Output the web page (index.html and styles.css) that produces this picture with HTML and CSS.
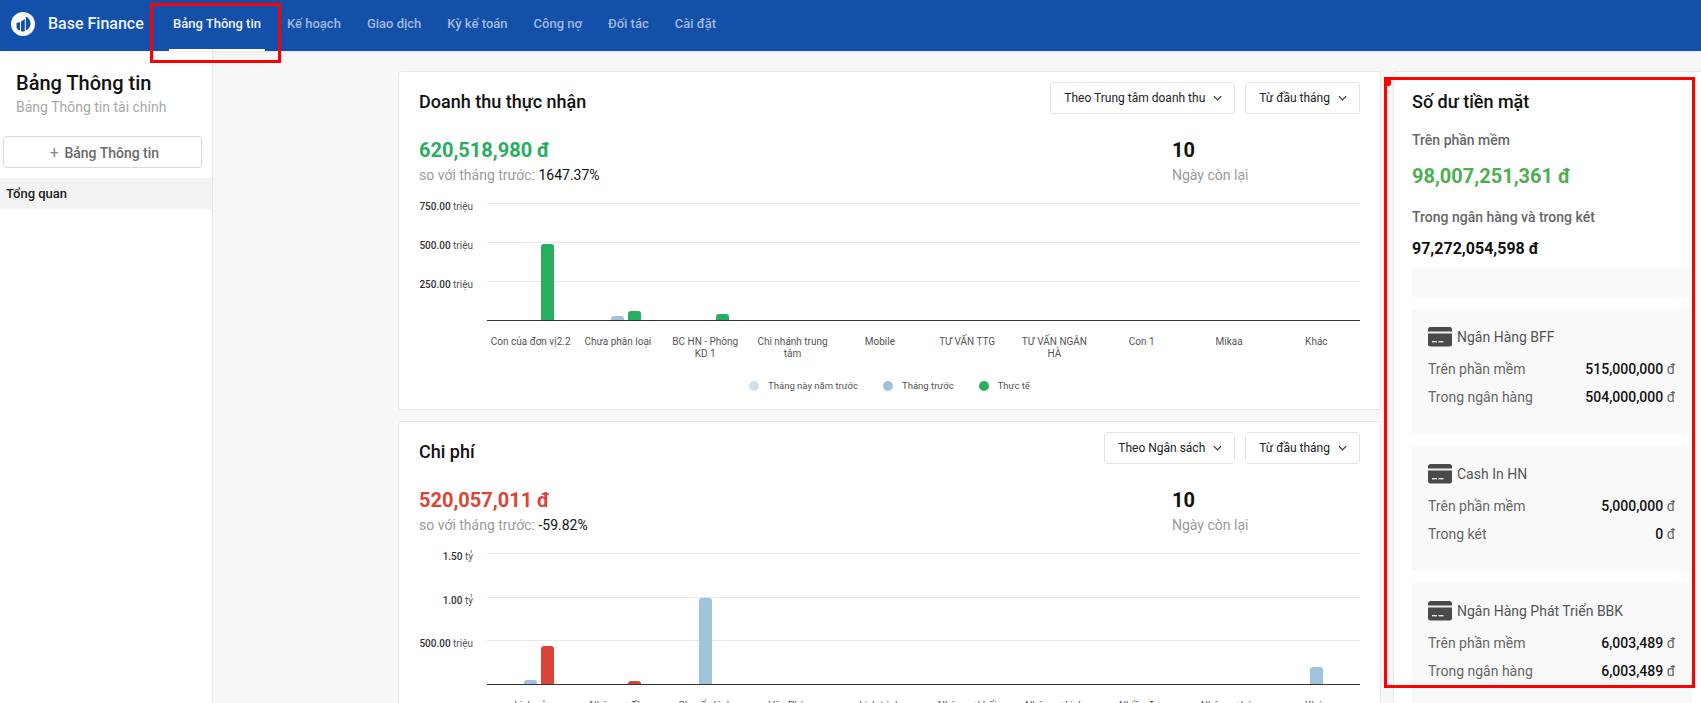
FILE: index.html
```html
<!DOCTYPE html>
<html lang="vi">
<head>
<meta charset="utf-8">
<title>Base Finance</title>
<link rel="stylesheet" href="styles.css">
</head>
<body>
<svg class="defs" width="0" height="0" aria-hidden="true">
  <defs>
    <symbol id="chev" viewBox="0 0 10 6"><path d="M1 1l4 4 4-4" fill="none" stroke="currentColor" stroke-width="1.3"/></symbol>
    <symbol id="bank" viewBox="0 0 24 20">
      <rect x="0" y="0" width="24" height="19.500" rx="2.500" fill="#4a4a4a"/>
      <rect x="0" y="4.500" width="24" height="2" fill="#f0f0f0"/>
      <rect x="4" y="14" width="5" height="1.400" fill="#e8e8e8"/>
      <rect x="10.500" y="14" width="5" height="1.400" fill="#e8e8e8"/>
    </symbol>
  </defs>
</svg>
<header class="topbar">
  <svg class="logo" viewBox="0 0 24 24" aria-hidden="true">
    <circle cx="12" cy="12" r="12" fill="#fff"/>
    <path d="M5.500 11l3.500-1v8.500l-2-.5q-1.500-2-1.500-3.500z" fill="#1250aa"/>
    <path d="M10 9.500l3.800-2.500v12.300q-1.900.3-3.800-.1z" fill="#1250aa"/>
    <path d="M14.800 4.500c2.800 1 4.700 3.900 4.700 7.200 0 2.800-1.900 5.500-4.700 6.800z" fill="#1250aa"/>
  </svg>
  <div class="brand">Base Finance</div>
  <nav class="nav">
    <a class="nav-item active">Bảng Thông tin</a>
    <a class="nav-item">Kế hoạch</a>
    <a class="nav-item">Giao dịch</a>
    <a class="nav-item">Kỳ kế toán</a>
    <a class="nav-item">Công nợ</a>
    <a class="nav-item">Đối tác</a>
    <a class="nav-item">Cài đặt</a>
  </nav>
</header>
<div class="layout">
  <aside class="sidebar">
    <h1 class="side-title">Bảng Thông tin</h1>
    <p class="side-sub">Bảng Thông tin tài chính</p>
    <button class="side-btn"><span class="plus">+</span> Bảng Thông tin</button>
    <div class="side-item">Tổng quan</div>
  </aside>
  <main class="main">
    <div class="charts">
      <section class="card card-rev">
        <div class="card-head">
          <h2 class="card-title">Doanh thu thực nhận</h2>
          <div class="filters">
            <div class="select">Theo Trung tâm doanh thu<svg class="chev"><use href="#chev"/></svg></div>
            <div class="select">Từ đầu tháng<svg class="chev"><use href="#chev"/></svg></div>
          </div>
        </div>
        <div class="metrics">
          <div>
            <div class="amount green">620,518,980 đ</div>
            <div class="muted">so với tháng trước: <span class="dark">1647.37%</span></div>
          </div>
          <div>
            <div class="amount dark">10</div>
            <div class="muted">Ngày còn lại</div>
          </div>
        </div>
        <div class="chart chart-a">
          <div class="ylabels">
            <div class="ylabel">750.00 <span>triệu</span></div>
            <div class="ylabel">500.00 <span>triệu</span></div>
            <div class="ylabel">250.00 <span>triệu</span></div>
          </div>
          <div class="plot">
            <div class="gridrow"></div><div class="gridrow"></div><div class="gridrow"></div>
            <div class="bars">
              <div class="cat"><i class="slot"></i><i class="slot"></i><i class="slot"><b class="bar green-bar" style="height:76px"></b></i></div>
              <div class="cat"><i class="slot"></i><i class="slot"><b class="bar blue-bar" style="height:4px"></b></i><i class="slot"><b class="bar green-bar" style="height:9px"></b></i></div>
              <div class="cat"><i class="slot"></i><i class="slot"></i><i class="slot"><b class="bar green-bar" style="height:6px"></b></i></div>
              <div class="cat"><i class="slot"></i><i class="slot"></i><i class="slot"></i></div>
              <div class="cat"><i class="slot"></i><i class="slot"></i><i class="slot"></i></div>
              <div class="cat"><i class="slot"></i><i class="slot"></i><i class="slot"></i></div>
              <div class="cat"><i class="slot"></i><i class="slot"></i><i class="slot"></i></div>
              <div class="cat"><i class="slot"></i><i class="slot"></i><i class="slot"></i></div>
              <div class="cat"><i class="slot"></i><i class="slot"></i><i class="slot"></i></div>
              <div class="cat"><i class="slot"></i><i class="slot"></i><i class="slot"></i></div>
            </div>
          </div>
          <div class="xlabels">
            <div>Con của đơn vị2.2</div><div>Chưa phân loại</div><div>BC HN - Phòng<br>KD 1</div><div>Chi nhánh trung<br>tâm</div><div>Mobile</div><div>TƯ VẤN TTG</div><div>TƯ VẤN NGÂN<br>HÀ</div><div>Con 1</div><div>Mikaa</div><div>Khác</div>
          </div>
          <div class="legend">
            <span class="leg"><i class="dot light-dot"></i>Tháng này năm trước</span>
            <span class="leg"><i class="dot blue-dot"></i>Tháng trước</span>
            <span class="leg"><i class="dot green-dot"></i>Thực tế</span>
          </div>
        </div>
      </section>
      <section class="card">
        <div class="card-head">
          <h2 class="card-title">Chi phí</h2>
          <div class="filters">
            <div class="select">Theo Ngân sách<svg class="chev"><use href="#chev"/></svg></div>
            <div class="select">Từ đầu tháng<svg class="chev"><use href="#chev"/></svg></div>
          </div>
        </div>
        <div class="metrics">
          <div>
            <div class="amount red">520,057,011 đ</div>
            <div class="muted">so với tháng trước: <span class="dark">-59.82%</span></div>
          </div>
          <div>
            <div class="amount dark">10</div>
            <div class="muted">Ngày còn lại</div>
          </div>
        </div>
        <div class="chart chart-b">
          <div class="ylabels">
            <div class="ylabel">1.50 <span>tỷ</span></div>
            <div class="ylabel">1.00 <span>tỷ</span></div>
            <div class="ylabel">500.00 <span>triệu</span></div>
          </div>
          <div class="plot">
            <div class="gridrow"></div><div class="gridrow"></div><div class="gridrow"></div>
            <div class="bars">
              <div class="cat"><i class="slot"></i><i class="slot"><b class="bar blue-bar" style="height:4px"></b></i><i class="slot"><b class="bar red-bar" style="height:38px"></b></i></div>
              <div class="cat"><i class="slot"></i><i class="slot"></i><i class="slot"><b class="bar red-bar" style="height:3px"></b></i></div>
              <div class="cat"><i class="slot"></i><i class="slot"><b class="bar blue-bar" style="height:86px"></b></i><i class="slot"></i></div>
              <div class="cat"><i class="slot"></i><i class="slot"></i><i class="slot"></i></div>
              <div class="cat"><i class="slot"></i><i class="slot"></i><i class="slot"></i></div>
              <div class="cat"><i class="slot"></i><i class="slot"></i><i class="slot"></i></div>
              <div class="cat"><i class="slot"></i><i class="slot"></i><i class="slot"></i></div>
              <div class="cat"><i class="slot"></i><i class="slot"></i><i class="slot"></i></div>
              <div class="cat"><i class="slot"></i><i class="slot"></i><i class="slot"></i></div>
              <div class="cat"><i class="slot"></i><i class="slot"><b class="bar blue-bar" style="height:17px"></b></i><i class="slot"></i></div>
            </div>
          </div>
          <div class="xlabels">
            <div>Lịch sử</div><div>Nhân sự đầu</div><div>Chuyển lệch</div><div>Văn Phòng</div><div>Lịch trình</div><div>Nhân sự khối</div><div>Nhân sự kinh doanh</div><div>Nhiều đơn</div><div>Nhân sự bán</div><div>Khác</div>
          </div>
        </div>
      </section>
    </div>
    <section class="card cash">
      <h2 class="card-title">Số dư tiền mặt</h2>
      <div class="cash-label cash-l1">Trên phần mềm</div>
      <div class="cash-big">98,007,251,361 đ</div>
      <div class="cash-label cash-l2">Trong ngân hàng và trong két</div>
      <div class="cash-total">97,272,054,598 đ</div>
      <div class="cash-spacer"></div>
      <div class="acct">
        <div class="acct-name"><svg class="acct-icon"><use href="#bank"/></svg>Ngân Hàng BFF</div>
        <div class="acct-row"><span>Trên phần mềm</span><span><b>515,000,000</b> đ</span></div>
        <div class="acct-row"><span>Trong ngân hàng</span><span><b>504,000,000</b> đ</span></div>
      </div>
      <div class="acct">
        <div class="acct-name"><svg class="acct-icon"><use href="#bank"/></svg>Cash In HN</div>
        <div class="acct-row"><span>Trên phần mềm</span><span><b>5,000,000</b> đ</span></div>
        <div class="acct-row"><span>Trong két</span><span><b>0</b> đ</span></div>
      </div>
      <div class="acct">
        <div class="acct-name"><svg class="acct-icon"><use href="#bank"/></svg>Ngân Hàng Phát Triển BBK</div>
        <div class="acct-row"><span>Trên phần mềm</span><span><b>6,003,489</b> đ</span></div>
        <div class="acct-row"><span>Trong ngân hàng</span><span><b>6,003,489</b> đ</span></div>
      </div>
    </section>
  </main>
</div>
<div class="mark mark-nav"></div>
<div class="mark mark-cash"></div>
</body>
</html>
```
FILE: styles.css
```css
* { box-sizing: border-box; }
html, body { margin: 0; height: 703px; overflow: hidden; }
body { font-family: Roboto, "Noto Sans", sans-serif; background: #f7f7f7; color: #111; position: relative; }
.defs { position: absolute; }
h1, h2, p { margin: 0; font-weight: 500; }

.topbar { height: 51px; background: #1250aa; display: flex; align-items: center; padding: 0 0 3px 11px; box-shadow: 0 1px 3px rgba(0,0,0,.08); position: relative; }
.logo { width: 24px; height: 24px; flex: none; }
.brand { margin-left: 13px; color: #eef3fb; font-size: 16px; font-weight: 500; line-height: 20px; width: 96px; white-space: nowrap; }
.nav { display: flex; gap: 18px; margin-left: 25px; height: 51px; margin-bottom: -3px; }
.nav-item { padding: 0 4px; font-size: 13px; font-weight: 500; line-height: 47px; color: #a3b9dd; border-bottom: 2px solid transparent; white-space: nowrap; height: 51px; }
.nav-item.active { color: #f2f6fc; border-bottom-color: #fff; }

.layout { display: flex; height: 652px; }
.sidebar { width: 213px; flex: none; background: #fff; border-right: 1px solid #e6e6e6; padding-top: 19px; }
.side-title { font-size: 20px; line-height: 26px; padding-left: 16px; color: #111; }
.side-sub { font-size: 14px; line-height: 20px; padding-left: 16px; margin-top: 1px; color: #a8a8a8; font-weight: 400; }
.side-btn { display: block; width: 199px; height: 32px; margin: 19px 0 0 3px; background: #fff; border: 1px solid #d9d9d9; border-radius: 4px; font: 500 14px Roboto, sans-serif; color: #6a6a6a; padding: 0 0 0 4px; }
.plus { font-weight: 400; font-size: 16px; color: #888; margin-right: 2px; }
.side-item { margin-top: 10px; height: 31px; line-height: 32px; background: #f3f3f3; padding-left: 6px; font-size: 13px; font-weight: 500; color: #222; }

.main { flex: 1; min-width: 0; display: flex; gap: 12px; padding: 20px 0 0 185px; align-items: flex-start; }
.charts { width: 983px; flex: none; display: flex; flex-direction: column; gap: 11px; }
.card { background: #fff; border: 1px solid #e8e8e8; border-radius: 3px; padding: 0 20px; }
.card-rev { height: 339px; }

.card-head { display: flex; justify-content: space-between; align-items: flex-start; padding-top: 10px; height: 66px; }
.card-title { font-size: 18px; line-height: 26px; font-weight: 500; color: #111; margin-top: 7px; }
.filters { display: flex; gap: 10px; }
.select { display: flex; align-items: center; height: 32px; padding: 0 12px 0 13px; border: 1px solid #e4e4e4; border-radius: 3px; font-size: 12px; color: #222; background: #fff; white-space: nowrap; }
.chev { width: 9px; height: 6px; margin-left: 8px; color: #333; }

.metrics { display: grid; grid-template-columns: 1fr 188px; }
.amount { font-size: 20px; font-weight: 700; line-height: 24px; }
.muted { font-size: 14px; line-height: 20px; margin-top: 3px; color: #9b9b9b; }
.green { color: #27ae60; }
.red { color: #db4437; }
.dark { color: #111; }
.muted .dark { font-weight: 400; }

.chart { display: grid; grid-template-columns: 68px 1fr; margin-top: 18px; }
.chart-a { --row: 39px; }
.chart-b { --row: 43.670px; }
.ylabels { padding-right: 14px; margin-top: -2px; }
.ylabel { height: var(--row); font-size: 10px; line-height: 12px; text-align: right; color: #333; font-weight: 500; }
.ylabel span { font-weight: 400; color: #555; }
.plot { position: relative; border-bottom: 1.5px solid #333; }
.gridrow { height: var(--row); border-top: 1px solid #e8e8e8; }
.bars { position: absolute; inset: 0; display: grid; grid-template-columns: repeat(10, 1fr); }
.cat { display: flex; justify-content: center; gap: 4px; align-items: flex-end; }
.slot { width: 13px; display: flex; align-items: flex-end; }
.bar { display: block; width: 13px; border-radius: 3px 3px 0 0; }
.green-bar { background: #27ae60; }
.blue-bar { background: #a0c3dc; }
.red-bar { background: #db4437; }

.xlabels { grid-column: 2; display: grid; grid-template-columns: repeat(10, 1fr); margin-top: 15px; font-size: 10px; line-height: 12px; color: #555; text-align: center; }
.xlabels div { padding: 0 2px; }
.legend { grid-column: 1 / -1; display: flex; justify-content: center; gap: 25px; margin-top: 20px; font-size: 9.500px; line-height: 12px; color: #555; }
.leg { display: flex; align-items: center; gap: 9px; }
.dot { width: 10px; height: 10px; border-radius: 50%; }
.light-dot { background: #cfe0ed; }
.blue-dot { background: #a0c3dc; }
.green-dot { background: #27ae60; }

.cash { flex: 1; min-width: 0; height: 700px; padding: 17px 9px 0 18px; border-right: 0; border-radius: 3px 0 0 0; }
.cash .card-title { margin-top: 0; }
.cash-label { font-size: 14px; line-height: 20px; font-weight: 500; color: #666; }
.cash-l1 { margin-top: 15px; }
.cash-l2 { margin-top: 18px; }
.cash-big { font-size: 20px; line-height: 26px; font-weight: 700; color: #4caf50; margin-top: 13px; }
.cash-total { font-size: 16px; line-height: 22px; font-weight: 700; color: #111; margin-top: 11px; }
.cash-spacer { height: 29px; margin-top: 8px; background: #f9f9f9; }
.acct { height: 125px; margin-top: 12px; background: #f9f9f9; padding: 18px 17px 0 16px; }
.acct-name { display: flex; align-items: center; gap: 5px; height: 20px; font-size: 14px; color: #555; }
.acct-icon { width: 24px; height: 20px; flex: none; }
.acct-row { display: flex; justify-content: space-between; height: 28px; line-height: 28px; font-size: 14px; color: #666; }
.acct-name + .acct-row { margin-top: 8px; }
.acct-row b { font-weight: 500; color: #111; }

.mark { position: absolute; border: 3px solid #f00; pointer-events: none; }
.mark-nav { left: 150px; top: 3px; width: 131px; height: 60px; }
.mark-cash { left: 1384px; top: 77px; width: 311px; height: 611px; }
.mark-cash::before { content: ""; position: absolute; left: -2px; top: -1px; width: 6px; height: 7px; border-radius: 2px; background: #f00; }
```
